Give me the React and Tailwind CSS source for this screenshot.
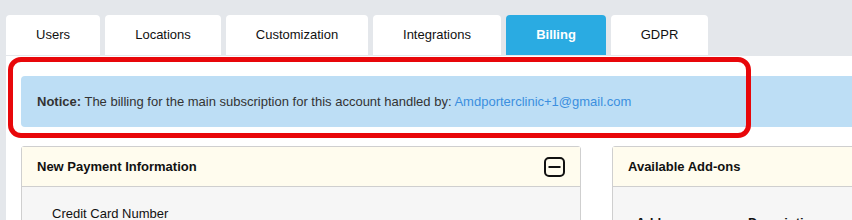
import React from 'react';

const TABS = [
  { label: 'Users', w: 'w-[94px]' },
  { label: 'Locations', w: 'w-[116px]' },
  { label: 'Customization', w: 'w-[142px]' },
  { label: 'Integrations', w: 'w-[128px]' },
  { label: 'Billing', w: 'w-[100px]', active: true },
  { label: 'GDPR', w: 'w-[97px]' },
];

function MinusBox() {
  return (
    <svg width="21" height="20" viewBox="0 0 21 20" className="block">
      <rect x="1" y="1" width="19" height="18" rx="4" fill="none" stroke="#111" strokeWidth="2" />
      <line x1="4.5" y1="10" x2="16.5" y2="10" stroke="#111" strokeWidth="2" />
    </svg>
  );
}

export default function App() {
  return (
    <div className="w-[852px] h-[220px] overflow-hidden bg-[#e4e7eb] pl-[6px] pt-[15px] font-['Liberation_Sans',Arial,sans-serif] text-[13px] text-[#222]">
      {/* Tabs */}
      <div className="flex gap-[5px] h-[40px]">
        {TABS.map((t) => (
          <div
            key={t.label}
            className={`${t.w} h-full rounded-t-[4px] flex items-center justify-center ${
              t.active ? 'bg-[#2aabe2] text-white font-bold' : 'bg-white text-[#111]'
            }`}
          >
            {t.label}
          </div>
        ))}
      </div>

      {/* Content */}
      <div className="relative mt-[1px] w-[900px] bg-white pl-[15px] pt-[20px] h-[200px]">
        <div className="h-[51px] rounded-l-[4px] bg-[#bddef5] flex items-center pl-[16px] text-[#333]">
          <span>
            <b>Notice:</b> The billing for the main subscription for this account handled by:{' '}
            <a className="text-[#3b8fdf]">Amdporterclinic+1@gmail.com</a>
          </span>
        </div>

        {/* Annotation */}
        <div className="absolute left-[2px] top-[1px] w-[743px] h-[81px] rounded-[13px] border-[5px] border-[#e8070a]" />

        <div className="flex gap-[31px] mt-[19px]">
          <div className="w-[560px] rounded-t-[3px] border border-[#cfcfcf] bg-[#f6f6f6] h-[120px]">
            <div className="h-[40px] bg-[#fffcee] border-b border-[#cfcfcf] flex items-center justify-between pl-[15px] pr-[15px]">
              <span className="font-bold text-[#111]">New Payment Information</span>
              <MinusBox />
            </div>
            <div className="pl-[30px] pt-[17px] text-[#111]">Credit Card Number</div>
          </div>
          <div className="flex-1 rounded-t-[3px] border border-[#cfcfcf] bg-[#f6f6f6] h-[120px]">
            <div className="h-[40px] bg-[#fffcee] border-b border-[#cfcfcf] flex items-center pl-[15px]">
              <span className="font-bold text-[#111]">Available Add-ons</span>
            </div>
            <div className="flex pl-[23px] pt-[26px] font-bold text-[#111]">
              <span className="w-[112px]">Add-on</span>
              <span>Description</span>
            </div>
          </div>
        </div>
      </div>
    </div>
  );
}
